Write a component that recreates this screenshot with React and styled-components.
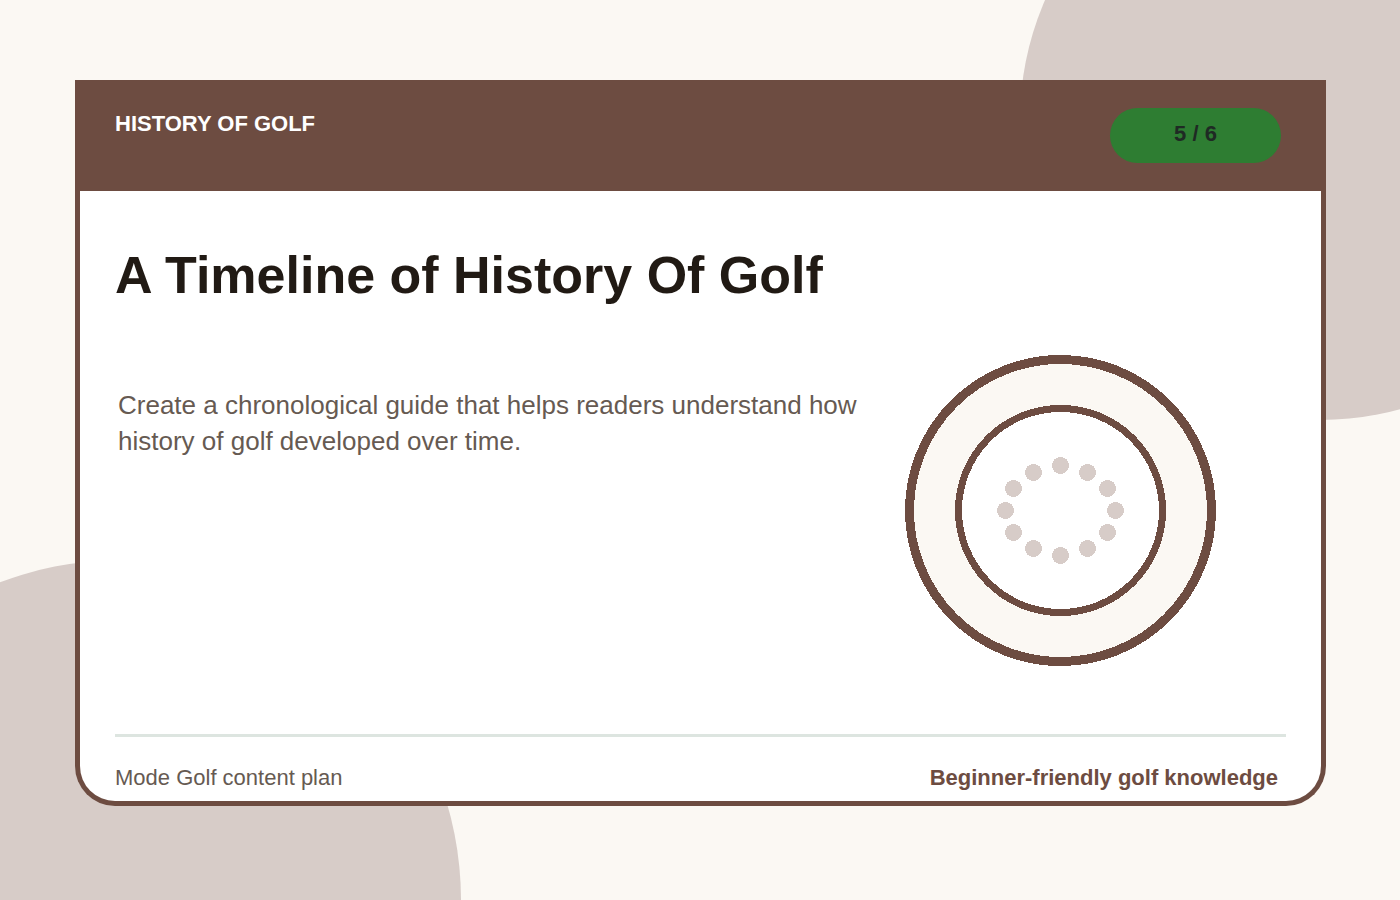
import styled, { createGlobalStyle } from "styled-components";

const GlobalStyle = createGlobalStyle`
  html, body {
    margin: 0;
    padding: 0;
  }
  body {
    background: #fbf8f3;
    font-family: "Liberation Sans", Arial, sans-serif;
  }
`;

const dots = Array.from({ length: 12 }, (_, i) => {
  const a = (i * Math.PI) / 6;
  return {
    x: 155.5 + Math.trunc(55 * Math.cos(a)),
    y: 155.5 + Math.trunc(45 * Math.sin(a)),
  };
});

const Page = styled.div`
  position: relative;
  box-sizing: border-box;
  width: 1400px;
  height: 900px;
  padding: 80px 74px 94px 75px;
  overflow: hidden;
`;

const Blob = styled.div`
  position: absolute;
  border-radius: 50%;
  background: #d7ccc8;
  width: ${(p) => p.$size}px;
  height: ${(p) => p.$size}px;
  ${(p) => p.$corner === "top" ? "top: -180px; right: -220px;" : "bottom: -340px; left: -219px;"}
`;

const Card = styled.main`
  position: relative;
  box-sizing: border-box;
  display: flex;
  flex-direction: column;
  height: 726px;
  background: #fff;
  border: 5px solid #6d4c41;
  border-top: none;
  border-radius: 0 0 40px 40px;
`;

const Header = styled.header`
  display: flex;
  justify-content: space-between;
  align-items: flex-start;
  box-sizing: border-box;
  height: 111px;
  margin: 0 -5px;
  padding: 28px 45px 28px 40px;
  background: #6d4c41;
`;

const Section = styled.div`
  margin-top: 3px;
  color: #fff;
  font-size: 22px;
  font-weight: 700;
  line-height: 25px;
`;

const Pill = styled.div`
  box-sizing: border-box;
  width: 171px;
  height: 55px;
  padding-top: 13px;
  border-radius: 28px;
  background: #2e7d32;
  color: #1f2a24;
  font-size: 22px;
  font-weight: 700;
  line-height: 25px;
  text-align: center;
`;

const Content = styled.div`
  flex: 1;
  display: flex;
  flex-direction: column;
  padding: 54px 35px 0;
`;

const Title = styled.h1`
  margin: 0;
  color: #211a14;
  font-size: 52px;
  font-weight: 700;
  line-height: 60px;
`;

const Row = styled.div`
  display: flex;
  justify-content: space-between;
  align-items: flex-start;
  height: 311px;
  margin-top: 50px;
  padding-right: 70px;
`;

const Lead = styled.p`
  width: 770px;
  margin: 32px 0 0 3px;
  color: #665a52;
  font-size: 26px;
  line-height: 36px;
`;

const Footer = styled.footer`
  display: flex;
  justify-content: space-between;
  align-items: center;
  margin-top: 68px;
  padding: 28px 8px 0 0;
  border-top: 3px solid #dde5e0;
  font-size: 22px;
  line-height: 25px;
`;

const Source = styled.span`
  color: #665a52;
`;

const Tagline = styled.span`
  color: #6d4c41;
  font-weight: 700;
`;

export default function App() {
  return (
    <>
      <GlobalStyle />
      <Page>
        <Blob $corner="top" $size={600} />
        <Blob $corner="bottom" $size={680} />
        <Card>
          <Header>
            <Section>HISTORY OF GOLF</Section>
            <Pill>5 / 6</Pill>
          </Header>
          <Content>
            <Title>A Timeline of History Of Golf</Title>
            <Row>
              <Lead>
                Create a chronological guide that helps readers understand how
                history of golf developed over time.
              </Lead>
              <svg width="311" height="311" viewBox="0 0 311 311" shapeRendering="crispEdges">
                <circle cx="155.5" cy="155.5" r="151" fill="#fbf8f3" stroke="#6d4c41" strokeWidth="9" />
                <circle cx="155.5" cy="155.5" r="102" fill="#fff" stroke="#6d4c41" strokeWidth="7" />
                {dots.map((d, i) => (
                  <circle key={i} cx={d.x} cy={d.y} r="8.5" fill="#d7ccc8" />
                ))}
              </svg>
            </Row>
            <Footer>
              <Source>Mode Golf content plan</Source>
              <Tagline>Beginner-friendly golf knowledge</Tagline>
            </Footer>
          </Content>
        </Card>
      </Page>
    </>
  );
}
